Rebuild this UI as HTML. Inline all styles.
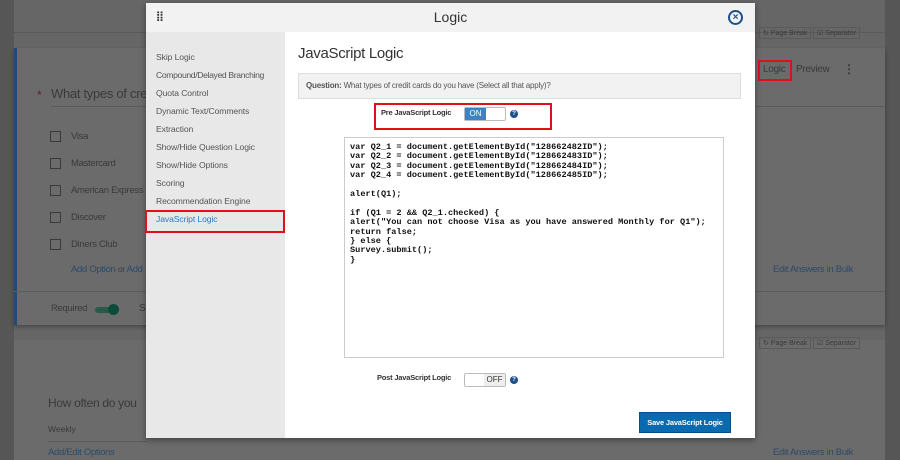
<!DOCTYPE html>
<html><head><style>
*{box-sizing:border-box;margin:0;padding:0}
body{width:900px;height:460px;overflow:hidden;background:#5e5e5e;font-family:"Liberation Sans",sans-serif;position:relative}
.a{position:absolute}
.t{position:absolute;white-space:nowrap}
.grey{color:#3a3a3a}
.cb{position:absolute;width:11px;height:11px;border:1px solid #3a3a3a}
.blue{color:#2c4a6a}
.side div{position:absolute;left:10px;font-size:8.6px;color:#555;white-space:nowrap;letter-spacing:-0.1px}
pre{font-family:"Liberation Mono",monospace;font-size:8.6px;line-height:9.4px;color:#111;font-weight:bold}
.c{letter-spacing:-0.3px}
</style></head><body>
<div class="a" style="left:0;top:0;width:14px;height:460px;background:#565656"></div>
<div class="a" style="left:885px;top:0;width:15px;height:460px;background:#565656"></div>
<div class="a" style="left:14px;top:0;width:871px;height:460px;background:#666"></div>
<div class="a" style="left:14px;top:32px;width:871px;height:1px;background:#5a5a5a"></div>
<div class="a" style="left:14px;top:48px;width:871px;height:277px;background:#6b6b6b;box-shadow:0 2px 4px rgba(0,0,0,.3)"></div>
<div class="a" style="left:14px;top:48px;width:3px;height:277px;background:#1e4a7c"></div>
<div class="a" style="left:14px;top:340px;width:871px;height:120px;background:#6b6b6b"></div>
<div class="t" style="left:37px;top:88px;color:#6a1a1a;font-size:12px">*</div>
<div class="t grey c" style="left:51px;top:86px;font-size:13px">What types of credit cards</div>
<div class="a" style="left:51px;top:106px;width:100px;height:1px;background:#5c5c5c"></div>
<div class="cb" style="left:50px;top:131px"></div><div class="t grey c" style="left:71px;top:131px;font-size:9.5px">Visa</div>
<div class="cb" style="left:50px;top:158px"></div><div class="t grey c" style="left:71px;top:158px;font-size:9.5px">Mastercard</div>
<div class="cb" style="left:50px;top:185px"></div><div class="t grey c" style="left:71px;top:185px;font-size:9.5px">American Express</div>
<div class="cb" style="left:50px;top:212px"></div><div class="t grey c" style="left:71px;top:212px;font-size:9.5px">Discover</div>
<div class="cb" style="left:50px;top:239px"></div><div class="t grey c" style="left:71px;top:239px;font-size:9.5px">Diners Club</div>
<div class="t blue c" style="left:71px;top:264px;font-size:9.5px">Add Option <span style="color:#3a3a3a;font-size:8.5px">or</span> Add</div>
<div class="a" style="left:14px;top:291px;width:871px;height:1px;background:#5c5c5c"></div>
<div class="t grey c" style="left:51px;top:303px;font-size:9.5px">Required</div>
<div class="a" style="left:95px;top:307px;width:20px;height:6px;border-radius:3px;background:#2a5a4a"></div>
<div class="a" style="left:108px;top:304px;width:11px;height:11px;border-radius:50%;background:#0e4a3a"></div>
<div class="t grey" style="left:139px;top:303px;font-size:10px">S</div>
<div class="t blue c" style="left:773px;top:264px;font-size:9.5px">Edit Answers in Bulk</div>
<div class="a" style="left:758px;top:60px;width:34px;height:21px;border:2px solid #e0101a"></div>
<div class="t c" style="left:763px;top:64px;font-size:10px;color:#3a3a3a">Logic</div>
<div class="t grey c" style="left:796px;top:64px;font-size:10px">Preview</div>
<div class="t grey" style="left:843px;top:62px;font-size:12px;font-weight:bold">&#8942;</div>
<div class="a" style="left:755px;top:106px;width:130px;height:1px;background:#5c5c5c"></div>
<div class="t grey" style="left:759px;top:27px;font-size:7px;border:1px solid #5a5a5a;padding:1px 3px">&#8635; Page Break</div>
<div class="t grey" style="left:813px;top:27px;font-size:7px;border:1px solid #5a5a5a;padding:1px 3px">&#9745; Separator</div>
<div class="t grey" style="left:759px;top:337px;font-size:7px;border:1px solid #5a5a5a;padding:1px 3px">&#8635; Page Break</div>
<div class="t grey" style="left:813px;top:337px;font-size:7px;border:1px solid #5a5a5a;padding:1px 3px">&#9745; Separator</div>
<div class="t grey c" style="left:48px;top:396px;font-size:12px">How often do you</div>
<div class="t grey" style="left:48px;top:424px;font-size:8.5px">Weekly</div>
<div class="a" style="left:48px;top:441px;width:100px;height:1px;background:#5c5c5c"></div>
<div class="t blue c" style="left:48px;top:447px;font-size:9.5px">Add/Edit Options</div>
<div class="t blue c" style="left:773px;top:447px;font-size:9.5px">Edit Answers in Bulk</div>

<div class="a" style="left:146px;top:3px;width:609px;height:435px;background:#fff;box-shadow:0 2px 6px rgba(0,0,0,.4)">
 <div class="a" style="left:0;top:0;width:609px;height:29px;background:#f2f2f2"></div>
 <div class="t" style="left:10px;top:6px;font-size:13px;color:#333;font-weight:bold;letter-spacing:-1px">&#8286;&#8286;</div>
 <div class="t" style="left:0;width:609px;text-align:center;top:6px;font-size:14px;color:#333">Logic</div>
 <div class="a" style="left:582px;top:7px;width:15px;height:15px;border-radius:50%;border:2px solid #1d4f8a;color:#1d4f8a;font-size:10px;font-weight:bold;text-align:center;line-height:11px">&#215;</div>
 <div class="a side" style="left:0;top:29px;width:139px;height:406px;background:#e8e8e8">
  <div style="top:20px">Skip Logic</div>
  <div style="top:38px;letter-spacing:-0.35px">Compound/Delayed Branching</div>
  <div style="top:56px">Quota Control</div>
  <div style="top:74px">Dynamic Text/Comments</div>
  <div style="top:92px">Extraction</div>
  <div style="top:110px">Show/Hide Question Logic</div>
  <div style="top:128px">Show/Hide Options</div>
  <div style="top:146px">Scoring</div>
  <div style="top:164px">Recommendation Engine</div>
  <div style="top:182px;color:#2a7ac0">JavaScript Logic</div>
 </div>
 <div class="a" style="left:-1px;top:207px;width:140px;height:23px;border:2px solid #e0101a"></div>
 <div class="t c" style="left:152px;top:42px;font-size:15px;color:#333">JavaScript Logic</div>
 <div class="a" style="left:152px;top:70px;width:443px;height:26px;background:#f2f2f2;border:1px solid #ddd"></div>
 <div class="t" style="left:160px;top:78px;font-size:8px;color:#555;letter-spacing:-0.2px"><b>Question:</b> What types of credit cards do you have (Select all that apply)?</div>
 <div class="a" style="left:228px;top:100px;width:178px;height:27px;border:2px solid #e0101a"></div>
 <div class="t" style="left:235px;top:105px;font-size:7.5px;color:#333;font-weight:bold;letter-spacing:-0.2px">Pre JavaScript Logic</div>
 <div class="a" style="left:318px;top:104px;width:42px;height:14px;border:1px solid #bbb;border-radius:2px;background:#fff"></div>
 <div class="a" style="left:319px;top:105px;width:21px;height:12px;background:#3b83c8;color:#fff;font-size:8px;text-align:center;line-height:12px">ON</div>
 <div class="a" style="left:364px;top:107px;width:8px;height:8px;border-radius:50%;background:#1d4f8a;color:#fff;font-size:6.5px;text-align:center;line-height:8px;font-weight:bold">?</div>
 <div class="a" style="left:198px;top:134px;width:380px;height:221px;border:1px solid #ccc;padding:5px 5px"><pre>var Q2_1 = document.getElementById("128662482ID");
var Q2_2 = document.getElementById("128662483ID");
var Q2_3 = document.getElementById("128662484ID");
var Q2_4 = document.getElementById("128662485ID");

alert(Q1);

if (Q1 = 2 &amp;&amp; Q2_1.checked) {
alert("You can not choose Visa as you have answered Monthly for Q1");
return false;
} else {
Survey.submit();
}</pre></div>
 <div class="t" style="left:231px;top:370px;font-size:7.5px;color:#333;font-weight:bold;letter-spacing:-0.2px">Post JavaScript Logic</div>
 <div class="a" style="left:318px;top:370px;width:42px;height:14px;border:1px solid #bbb;border-radius:2px;background:#fff"></div>
 <div class="a" style="left:338px;top:371px;width:21px;height:12px;background:#eee;color:#333;font-size:8px;text-align:center;line-height:12px">OFF</div>
 <div class="a" style="left:364px;top:373px;width:8px;height:8px;border-radius:50%;background:#1d4f8a;color:#fff;font-size:6.5px;text-align:center;line-height:8px;font-weight:bold">?</div>
 <div class="a" style="left:493px;top:409px;width:92px;height:21px;background:#0a6ab0;border:1px solid #05508a;color:#fff;font-size:7.5px;text-align:center;line-height:19px;font-weight:bold;white-space:nowrap;letter-spacing:-0.2px">Save JavaScript Logic</div>
</div>
</body></html>
